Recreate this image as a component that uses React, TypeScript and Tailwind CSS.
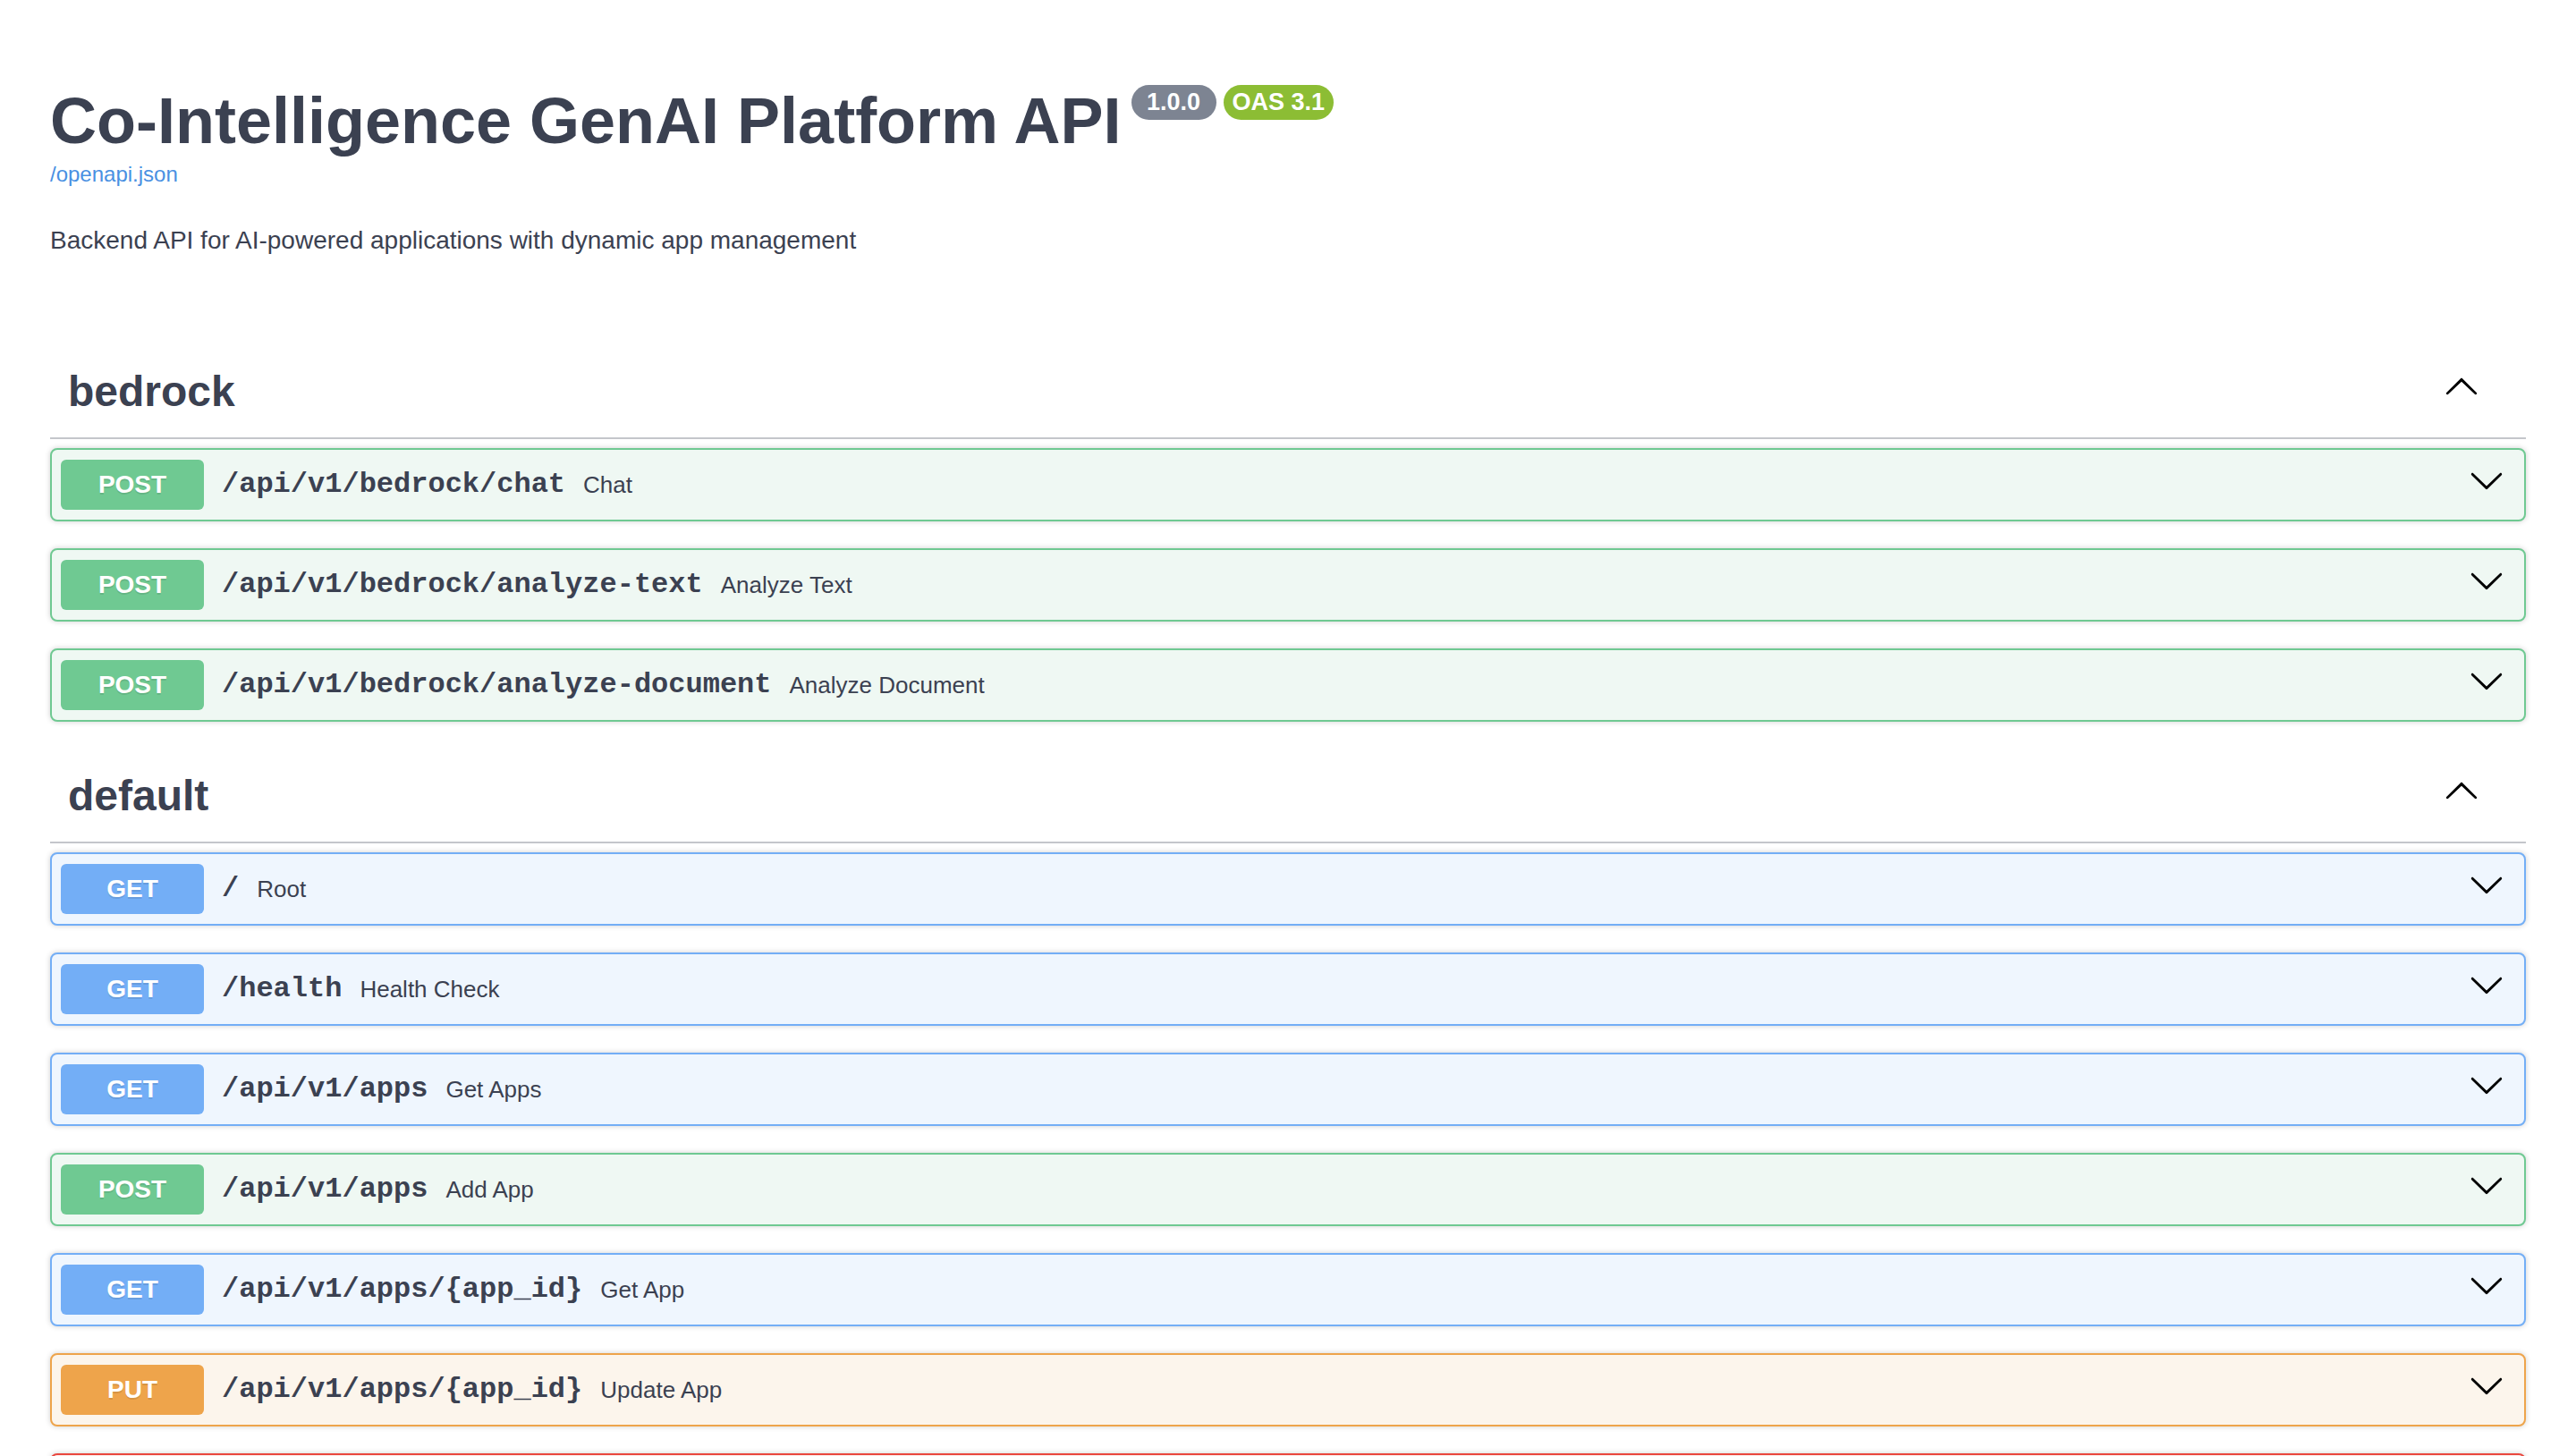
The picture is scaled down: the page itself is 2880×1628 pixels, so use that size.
import React from "react";

type Method = "GET" | "POST" | "PUT" | "DELETE";

interface Endpoint {
  method: Method;
  path: string;
  summary: string;
}

interface TagSection {
  name: string;
  endpoints: Endpoint[];
}

const methodStyles: Record<Method, { card: string; badge: string }> = {
  GET: { card: "border-[#73aef6] bg-[#eff6fe]", badge: "bg-[#73aef6]" },
  POST: { card: "border-[#6fc992] bg-[#eff8f3]", badge: "bg-[#6fc992]" },
  PUT: { card: "border-[#eea44b] bg-[#fcf5ec]", badge: "bg-[#eea44b]" },
  DELETE: { card: "border-[#e9473e] bg-[#fcefee]", badge: "bg-[#e9473e]" },
};

const sections: TagSection[] = [
  {
    name: "bedrock",
    endpoints: [
      { method: "POST", path: "/api/v1/bedrock/chat", summary: "Chat" },
      { method: "POST", path: "/api/v1/bedrock/analyze-text", summary: "Analyze Text" },
      { method: "POST", path: "/api/v1/bedrock/analyze-document", summary: "Analyze Document" },
    ],
  },
  {
    name: "default",
    endpoints: [
      { method: "GET", path: "/", summary: "Root" },
      { method: "GET", path: "/health", summary: "Health Check" },
      { method: "GET", path: "/api/v1/apps", summary: "Get Apps" },
      { method: "POST", path: "/api/v1/apps", summary: "Add App" },
      { method: "GET", path: "/api/v1/apps/{app_id}", summary: "Get App" },
      { method: "PUT", path: "/api/v1/apps/{app_id}", summary: "Update App" },
      { method: "DELETE", path: "/api/v1/apps/{app_id}", summary: "Delete App" },
    ],
  },
];

function ArrowDown({ className }: { className?: string }) {
  return (
    <svg width="40" height="40" viewBox="0 0 20 20" className={className} aria-hidden="true">
      <path
        fill="#000"
        d="M17.418 6.109c.272-.268.709-.268.979 0s.271.701 0 .969l-7.908 7.83c-.27.268-.707.268-.979 0l-7.908-7.83c-.27-.268-.27-.701 0-.969.271-.268.709-.268.979 0L10 13.25l7.418-7.141z"
      />
    </svg>
  );
}

function ArrowUp({ className }: { className?: string }) {
  return (
    <svg width="40" height="40" viewBox="0 0 20 20" className={className} aria-hidden="true">
      <path
        fill="#000"
        d="M17.418 14.908c.272.268.709.268.979 0s.271-.701 0-.969l-7.908-7.83c-.27-.268-.707-.268-.979 0l-7.908 7.83c-.27.268-.27.701 0 .969.271.268.709.268.979 0L10 7.845l7.418 7.063z"
      />
    </svg>
  );
}

function OperationCard({ op }: { op: Endpoint }) {
  const s = methodStyles[op.method];
  return (
    <div
      className={`mb-[30px] flex items-center rounded-[8px] border-2 py-[11px] pl-[10px] pr-[22px] shadow-[0_0_6px_rgba(0,0,0,0.19)] ${s.card}`}
    >
      <span
        className={`flex h-[56px] w-[160px] shrink-0 items-center justify-center rounded-[6px] text-[28px] font-bold text-white text-shadow-[0_2px_0_rgb(0_0_0/0.1)] ${s.badge}`}
      >
        {op.method}
      </span>
      <span className="px-[20px] font-['Liberation_Mono',monospace] text-[32px] font-bold text-[#3b4151]">
        {op.path}
      </span>
      <span className="flex-1 text-[26px] text-[#3b4151]">{op.summary}</span>
      <ArrowDown className="mb-[10px] shrink-0" />
    </div>
  );
}

function Section({ tag }: { tag: TagSection }) {
  return (
    <section>
      {/* Tag header */}
      <div className="flex items-center border-b-2 border-[#c4c6cb] pb-[23px] pl-[20px] pr-[52px] pt-[25px]">
        <h3 className="flex-1 text-[48px] font-bold leading-[56px] text-[#3b4151]">{tag.name}</h3>
        <ArrowUp className="mb-[14px] shrink-0" />
      </div>
      <div className="pt-[10px]">
        {tag.endpoints.map((op, i) => (
          <OperationCard key={i} op={op} />
        ))}
      </div>
    </section>
  );
}

export default function App() {
  return (
    <div className="h-screen overflow-hidden bg-white font-['Liberation_Sans',Arial,sans-serif] text-[#3b4151]">
      <div className="px-[56px] pt-[94px]">
        {/* Info */}
        <div className="flex items-start">
          <h2 className="text-[72px] font-bold leading-[83px] text-[#3b4151]">
            Co-Intelligence GenAI Platform API
          </h2>
          <div className="ml-[11px] mt-[1px] flex gap-[8px]">
            <span className="whitespace-pre rounded-full bg-[#7d8492] px-[10px] py-[4px] text-[27px] font-bold leading-[31px] text-white">
              {" 1.0.0 "}
            </span>
            <span className="rounded-full bg-[#8cbd34] px-[10px] py-[4px] text-[27px] font-bold leading-[31px] text-white">
              OAS 3.1
            </span>
          </div>
        </div>
        <a className="mt-[4px] block w-fit text-[24px] leading-[28px] text-[#4990e2]">/openapi.json</a>
        <p className="mt-[43px] mb-[99px] text-[28px] leading-[34px] text-[#3b4151]">
          Backend API for AI-powered applications with dynamic app management
        </p>

        {sections.map((tag) => (
          <Section key={tag.name} tag={tag} />
        ))}
      </div>
    </div>
  );
}
